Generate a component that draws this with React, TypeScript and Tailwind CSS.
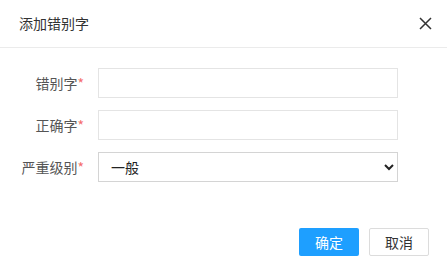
import React from "react";

const font = { fontFamily: '"Noto Sans CJK SC", "Liberation Sans", sans-serif' };

function Field({ label, children }: { label: string; children: React.ReactNode }) {
  return (
    <div className="flex items-center h-[30px]">
      <label className="w-[84px] text-right text-[14px] text-[#555] leading-none pr-0">
        {label}
        <span className="text-[#f56c6c]">*</span>
      </label>
      <div className="ml-[14px] w-[300px] h-[30px]">{children}</div>
    </div>
  );
}

export default function App() {
  return (
    <div className="w-[447px] h-[265px] bg-white" style={font}>
      <div className="h-[48px] flex items-center justify-between pl-[19px] pr-[15px] border-b border-[#ebebeb]">
        <h2 className="text-[14px] text-[#333] font-normal">添加错别字</h2>
        <button className="w-[14px] h-[14px] flex items-center justify-center text-[#333]">
          <svg width="13" height="13" viewBox="0 0 13 13" fill="none" stroke="currentColor" strokeWidth="1.5">
            <path d="M1 1L12 12M12 1L1 12" />
          </svg>
        </button>
      </div>
      <div className="pt-[20px] flex flex-col gap-[12px]">
        <Field label="错别字">
          <input className="w-full h-full border border-[#e4e4e4] px-2 text-[14px] outline-none" />
        </Field>
        <Field label="正确字">
          <input className="w-full h-full border border-[#e4e4e4] px-2 text-[14px] outline-none" />
        </Field>
        <Field label="严重级别">
          <select className="w-full h-full border border-[#d4d4d4] pl-[8px] pr-[4px] text-[14px] text-[#222] outline-none">
            <option>一般</option>
            <option>严重</option>
          </select>
        </Field>
      </div>
      <div className="flex justify-end gap-[10px] pr-[18px] mt-[46px]">
        <button className="w-[60px] h-[28px] rounded-[2px] bg-[#1e9fff] text-white text-[14px]">确定</button>
        <button className="w-[60px] h-[28px] rounded-[2px] border border-[#dcdcdc] text-[#333] text-[14px] bg-white">取消</button>
      </div>
    </div>
  );
}
